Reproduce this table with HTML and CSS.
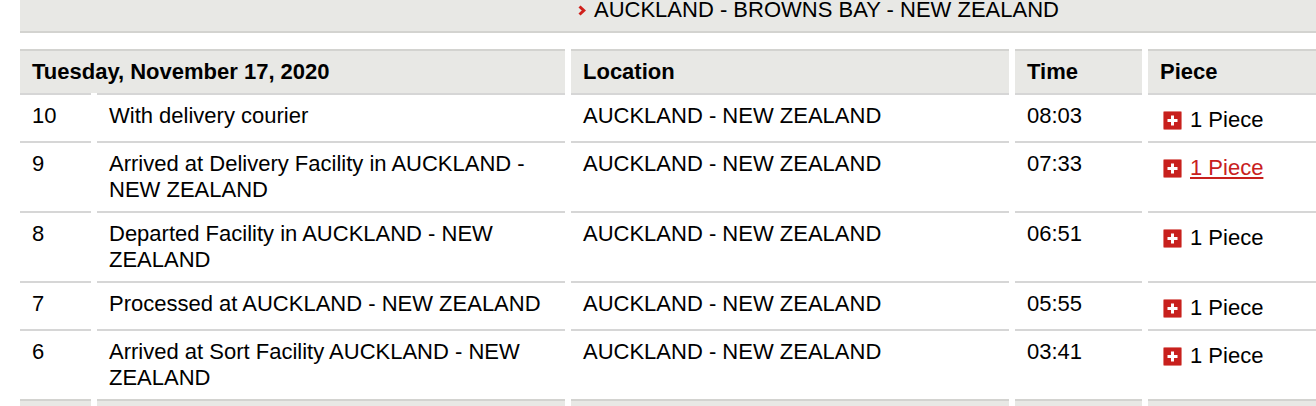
FILE: index.html
```html
<!DOCTYPE html>
<html lang="en">
<head>
<meta charset="utf-8">
<title>Shipment progress</title>
<link rel="stylesheet" href="styles.css">
</head>
<body>
<div class="page">
  <div class="dest">
    <svg class="chev" width="8" height="11" viewBox="0 0 8 11"><polyline points="1.5,1.5 5.8,5.5 1.5,9.5" fill="none" stroke="#d0211c" stroke-width="3"/></svg><span>AUCKLAND - BROWNS BAY - NEW ZEALAND</span>
  </div>
  <table class="events">
    <colgroup>
      <col class="c-num"><col class="c-desc"><col class="c-loc"><col class="c-time"><col class="c-piece">
    </colgroup>
    <thead>
      <tr><th colspan="2">Tuesday, November 17, 2020</th><th>Location</th><th>Time</th><th>Piece</th></tr>
    </thead>
    <tbody>
      <tr>
        <td>10</td><td>With delivery courier</td><td>AUCKLAND - NEW ZEALAND</td><td>08:03</td>
        <td class="piece"><div class="pc"><svg class="plus" width="19" height="19" viewBox="0 0 19 19"><rect x="0.5" y="0.5" width="18" height="18" rx="1" fill="#c8201d" stroke="#e0807c" stroke-width="1"/><rect x="8" y="4.5" width="3" height="10" fill="#fff"/><rect x="4.5" y="8" width="10" height="3" fill="#fff"/></svg><span>1 Piece</span></div></td>
      </tr>
      <tr>
        <td>9</td><td>Arrived at Delivery Facility in AUCKLAND - NEW ZEALAND</td><td>AUCKLAND - NEW ZEALAND</td><td>07:33</td>
        <td class="piece"><div class="pc"><svg class="plus" width="19" height="19" viewBox="0 0 19 19"><rect x="0.5" y="0.5" width="18" height="18" rx="1" fill="#c8201d" stroke="#e0807c" stroke-width="1"/><rect x="8" y="4.5" width="3" height="10" fill="#fff"/><rect x="4.5" y="8" width="10" height="3" fill="#fff"/></svg><a class="plink" href="#">1 Piece</a></div></td>
      </tr>
      <tr>
        <td>8</td><td>Departed Facility in AUCKLAND - NEW ZEALAND</td><td>AUCKLAND - NEW ZEALAND</td><td>06:51</td>
        <td class="piece"><div class="pc"><svg class="plus" width="19" height="19" viewBox="0 0 19 19"><rect x="0.5" y="0.5" width="18" height="18" rx="1" fill="#c8201d" stroke="#e0807c" stroke-width="1"/><rect x="8" y="4.5" width="3" height="10" fill="#fff"/><rect x="4.5" y="8" width="10" height="3" fill="#fff"/></svg><span>1 Piece</span></div></td>
      </tr>
      <tr>
        <td>7</td><td>Processed at AUCKLAND - NEW ZEALAND</td><td>AUCKLAND - NEW ZEALAND</td><td>05:55</td>
        <td class="piece"><div class="pc"><svg class="plus" width="19" height="19" viewBox="0 0 19 19"><rect x="0.5" y="0.5" width="18" height="18" rx="1" fill="#c8201d" stroke="#e0807c" stroke-width="1"/><rect x="8" y="4.5" width="3" height="10" fill="#fff"/><rect x="4.5" y="8" width="10" height="3" fill="#fff"/></svg><span>1 Piece</span></div></td>
      </tr>
      <tr>
        <td>6</td><td>Arrived at Sort Facility AUCKLAND - NEW ZEALAND</td><td>AUCKLAND - NEW ZEALAND</td><td>03:41</td>
        <td class="piece"><div class="pc"><svg class="plus" width="19" height="19" viewBox="0 0 19 19"><rect x="0.5" y="0.5" width="18" height="18" rx="1" fill="#c8201d" stroke="#e0807c" stroke-width="1"/><rect x="8" y="4.5" width="3" height="10" fill="#fff"/><rect x="4.5" y="8" width="10" height="3" fill="#fff"/></svg><span>1 Piece</span></div></td>
      </tr>
      <tr class="next">
        <td>&nbsp;</td><td>&nbsp;</td><td>&nbsp;</td><td>&nbsp;</td><td>&nbsp;</td>
      </tr>
    </tbody>
  </table>
</div>
</body>
</html>
```

FILE: styles.css
```css
html, body {
  margin: 0;
  padding: 0;
}
body {
  font-family: "Liberation Sans", Arial, Helvetica, sans-serif;
  font-size: 22px;
  line-height: 26px;
  color: #000;
  background: #fff;
  width: 1316px;
  height: 406px;
  overflow: hidden;
}
.page {
  width: 1360px;
}
.dest {
  display: flex;
  align-items: center;
  height: 26px;
  margin: -11px 0 16px 20px;
  padding: 8px 0 8px 558px;
  background: #e8e8e5;
  border-bottom: 2px solid #d3d3d0;
}
.chev {
  display: block;
  flex: none;
  margin-right: 8px;
  margin-top: 1px;
}
.events {
  margin-left: 14px;
  border-collapse: separate;
  border-spacing: 6px 0;
  table-layout: fixed;
  width: 1340px;
}
.c-num { width: 71px; }
.c-desc { width: 468px; }
.c-loc { width: 438px; }
.c-time { width: 127px; }
.c-piece { width: 200px; }
th, td {
  padding: 8px 12px;
  text-align: left;
  vertical-align: top;
  border-top: 2px solid #d6d6d6;
}
th {
  background: #e8e8e5;
  font-weight: bold;
  border-top-color: #d3d3d0;
}
td.piece {
  padding: 12px 12px 8px 15px;
}
.pc {
  display: flex;
  align-items: center;
  gap: 8px;
  height: 26px;
}
.plus {
  display: block;
  flex: none;
}
.plink {
  color: #c8201d;
  text-decoration: underline;
}
.next td {
  background: #e8e8e5;
  border-top-color: #d3d3d0;
}
```
